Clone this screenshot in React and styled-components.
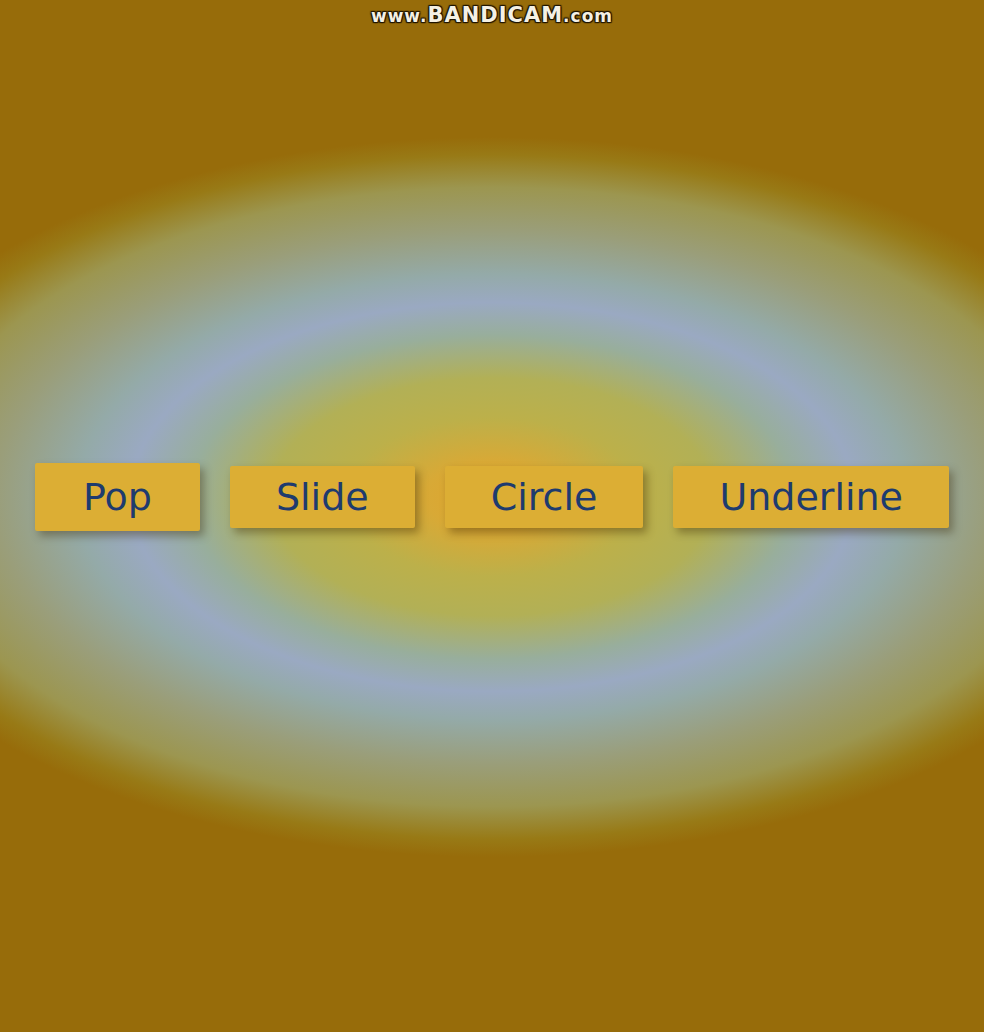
import React from "react"
import styled, { createGlobalStyle } from "styled-components"

const GlobalStyle = createGlobalStyle`
  html, body {
    margin: 0;
    padding: 0;
  }
  body {
    font-family: "DejaVu Sans", "Liberation Sans", sans-serif;
  }
`

const buttons = [
  { label: "Pop", big: true },
  { label: "Slide" },
  { label: "Circle" },
  { label: "Underline" }
]

export default function App() {
  return (
    <>
      <GlobalStyle />
      <Page>
        <Watermark>
          www.<b>BANDICAM</b>.com
        </Watermark>
        <Row>
          {buttons.map((b) => (
            <Button key={b.label} $big={b.big}>
              {b.label}
            </Button>
          ))}
        </Row>
      </Page>
    </>
  )
}

const Page = styled.div`
  position: relative;
  height: 1032px;
  box-sizing: border-box;
  padding: 0 0 38px 0;
  display: flex;
  align-items: center;
  justify-content: center;
  overflow: hidden;
  background: radial-gradient(
    ellipse 670px 360px at 492px 497px,
    #e0a42c 0%,
    #d8a936 10%,
    #bcb04a 22%,
    #b2b056 33%,
    #98ae9c 45%,
    #9aa9c2 54%,
    #94aaa8 62%,
    #9a9e7a 74%,
    #9c9650 86%,
    #987a16 95%,
    #976c0a 100%
  );
`

const Watermark = styled.div`
  position: absolute;
  top: 3px;
  left: 0;
  right: 0;
  text-align: center;
  font-family: "DejaVu Sans", sans-serif;
  font-size: 17px;
  font-weight: bold;
  letter-spacing: 1px;
  color: #f4f0e4;
  text-shadow: 0 0 2px #1e1400, 1px 1px 1px #1e1400, -1px -1px 1px #1e1400,
    1px -1px 1px #1e1400, -1px 1px 1px #1e1400;

  b {
    font-size: 21px;
  }
`

const Row = styled.div`
  display: flex;
  align-items: center;
  gap: 30px;
`

const Button = styled.button`
  height: ${(p) => (p.$big ? "68px" : "62px")};
  padding: 0 ${(p) => (p.$big ? "48px" : "46px")};
  border: none;
  border-radius: 2px;
  background: #dcae34;
  color: #1e3b6e;
  font-family: "DejaVu Sans", sans-serif;
  font-size: 38px;
  line-height: 1;
  box-shadow: 4px 5px 9px rgba(60, 40, 0, 0.4);
  cursor: pointer;
`
